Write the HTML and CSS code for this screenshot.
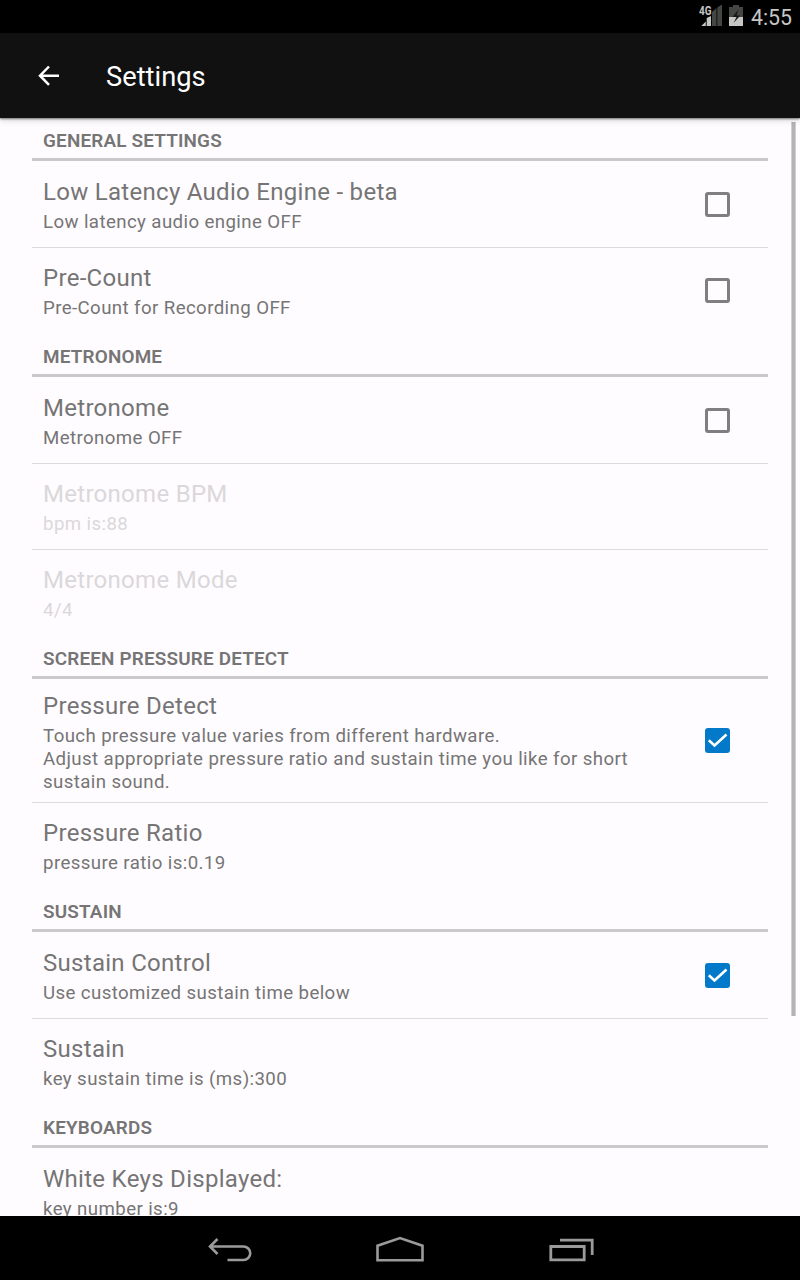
FILE: index.html
```html
<!DOCTYPE html>
<html lang="en">
<head>
<meta charset="utf-8">
<title>Settings</title>
<link rel="stylesheet" href="styles.css">
</head>
<body>
<div class="screen">
  <div class="status">
    <svg class="signal" width="24" height="24" viewBox="0 0 24 24">
      <path d="M13 24V10L17.500 6v18zM18.300 24V5.500L23 2.500V24z" fill="#444643"/>
      <path d="M2.300 24l4.500-4.500V24zM7.700 24v-8l4.300-2v10z" fill="#c6c7c5"/>
      <text x="0" y="13" class="net" textLength="12.5" lengthAdjust="spacingAndGlyphs">4G</text>
    </svg>
    <svg class="battery" width="14" height="21" viewBox="0 0 14 21">
      <path d="M4 0h6v2h4v10H0V2h4z" fill="#444643"/>
      <path d="M0 12h14v9H0z" fill="#c6c7c5"/>
      <path d="M9.500 4.500L3.500 12h4L4.500 18 11.300 10.500H7.500z" fill="#161716"/>
    </svg>
    <span class="clock">4:55</span>
  </div>
  <header class="appbar">
    <svg class="back" width="22" height="22" viewBox="0 0 22 22"><path d="M21 10.700H2.500M11 1.500L2 10.700l9 9.200" fill="none" stroke="#fff" stroke-width="2.500"/></svg>
    <h1>Settings</h1>
  </header>
  <main class="list">
    <div class="scrollbar"></div>
    <h2>GENERAL SETTINGS</h2>
    <div class="row"><div class="text"><p class="title">Low Latency Audio Engine - beta</p><p class="sub">Low latency audio engine OFF</p></div><span class="check"></span></div>
    <div class="row last"><div class="text"><p class="title">Pre-Count</p><p class="sub">Pre-Count for Recording OFF</p></div><span class="check"></span></div>
    <h2>METRONOME</h2>
    <div class="row"><div class="text"><p class="title">Metronome</p><p class="sub">Metronome OFF</p></div><span class="check"></span></div>
    <div class="row disabled"><div class="text"><p class="title">Metronome BPM</p><p class="sub">bpm is:88</p></div></div>
    <div class="row disabled last"><div class="text"><p class="title">Metronome Mode</p><p class="sub">4/4</p></div></div>
    <h2>SCREEN PRESSURE DETECT</h2>
    <div class="row tall"><div class="text"><p class="title">Pressure Detect</p><p class="sub">Touch pressure value varies from different hardware.<br>Adjust appropriate pressure ratio and sustain time you like for short<br>sustain sound.</p></div><span class="check on"><svg width="25" height="25" viewBox="0 0 25 25"><path d="M3.800 12.300l5.700 5.200L21.500 6.500" fill="none" stroke="#fff" stroke-width="2.600"/></svg></span></div>
    <div class="row last"><div class="text"><p class="title">Pressure Ratio</p><p class="sub">pressure ratio is:0.19</p></div></div>
    <h2>SUSTAIN</h2>
    <div class="row"><div class="text"><p class="title">Sustain Control</p><p class="sub">Use customized sustain time below</p></div><span class="check on"><svg width="25" height="25" viewBox="0 0 25 25"><path d="M3.800 12.300l5.700 5.200L21.500 6.500" fill="none" stroke="#fff" stroke-width="2.600"/></svg></span></div>
    <div class="row last"><div class="text"><p class="title">Sustain</p><p class="sub">key sustain time is (ms):300</p></div></div>
    <h2>KEYBOARDS</h2>
    <div class="row"><div class="text"><p class="title">White Keys Displayed:</p><p class="sub">key number is:9</p></div></div>
  </main>
  <nav class="navbar">
    <svg width="44" height="24" viewBox="0 0 44 24"><path d="M2 8.500H35.500a6.750 6.750 0 0 1 0 13.500H19.500M9.500 1L2 8.500l7.500 7.500" fill="none" stroke="#9a9a9a" stroke-width="2.600"/></svg>
    <svg width="48" height="26" viewBox="0 0 48 26"><path d="M1.500 24.200V9.700L24 2l22.500 7.700v14.500z" fill="none" stroke="#9a9a9a" stroke-width="2.600"/></svg>
    <svg width="46" height="24" viewBox="0 0 46 24"><path d="M1.800 8.500h33.400v13.400H1.800zM11 2.200h32.200V17" fill="none" stroke="#9a9a9a" stroke-width="2.800"/></svg>
  </nav>
</div>
</body>
</html>
```
FILE: styles.css
```css
body { margin: 0; font-family: Roboto, sans-serif; }
h1, h2, p { margin: 0; }
svg { display: block; flex: none; }
.screen { width: 800px; height: 1280px; display: flex; flex-direction: column; overflow: hidden; background: #fffcff; }
.status { flex: none; height: 33px; box-sizing: border-box; background: #000; display: flex; justify-content: flex-end; align-items: flex-start; padding-right: 8px; }
.signal { margin: 2px 6px 0 0; }
.net { font: bold 12.7px Roboto, sans-serif; fill: #c6c7c5; }
.battery { margin: 5px 8px 0 0; }
.clock { color: #c6c7c5; font-size: 21.3px; line-height: 36px; }
.appbar { flex: none; height: 85px; background: #111; display: flex; align-items: center; padding-left: 38px; z-index: 1; box-shadow: 0 1px 2px rgba(0,0,0,.5), 0 3px 6px rgba(0,0,0,.12); }
.back { margin-right: 46px; }
h1 { color: #fff; font-size: 27.3px; font-weight: 400; line-height: 32px; padding-top: 2px; }
.list { flex: 1; min-height: 0; overflow: hidden; position: relative; padding: 0 32px; color: #757575; }
.scrollbar { position: absolute; left: 791px; top: 4px; width: 3px; height: 894px; background: #b4b2b4; border: solid #d0ced0; border-width: 0 1px; }
h2 { height: 43px; box-sizing: border-box; margin-bottom: 1px; padding-left: 11px; border-bottom: 3px solid #cac8ca; font-size: 18.9px; font-weight: 600; line-height: 46px; letter-spacing: .18px; }
.row { min-height: 86px; box-sizing: border-box; border-bottom: 1px solid #dcdadc; display: flex; align-items: center; padding: 0 38px 0 11px; }
.row.last { border-color: transparent; }
.text { flex: 1; padding: 10px 0 9px; }
.title { font-size: 24px; line-height: 32px; letter-spacing: .29px; white-space: nowrap; }
.sub { font-size: 18.67px; line-height: 23px; letter-spacing: .4px; padding-top: 3px; white-space: nowrap; }
.tall .text { padding-bottom: 8px; }
.tall .check { margin-bottom: 1px; }
.disabled .text { color: #dad8da; }
.check { flex: none; width: 25px; height: 25px; box-sizing: border-box; border: 3px solid #807e80; border-radius: 3px; }
.check.on { border: 0; background: #0279c9; }
.navbar { flex: none; height: 64px; box-sizing: border-box; background: #000; display: flex; align-items: flex-start; padding: 21px 0 0 208px; }
.navbar svg:nth-child(1) { margin: 1px 124px 0 0; }
.navbar svg:nth-child(2) { margin: -1px 125px 0 0; }
.navbar svg:nth-child(3) { margin-top: 1px; }
```
